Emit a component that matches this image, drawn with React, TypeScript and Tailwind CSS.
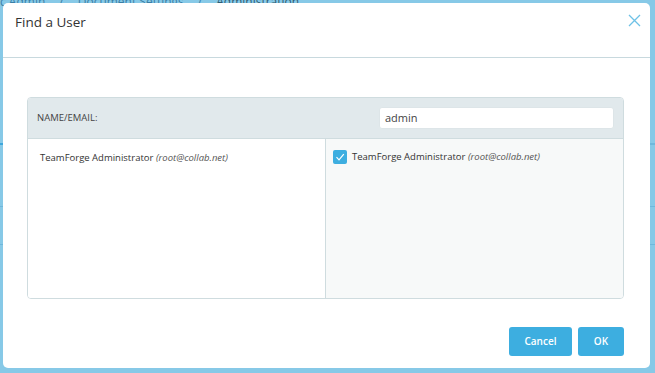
import React from "react";

export default function App() {
  const font = { fontFamily: '"Open Sans", "Liberation Sans", sans-serif' };
  return (
    <div className="relative w-[655px] h-[373px] overflow-hidden bg-[#87c9e7]" style={font}>
      {/* faint background page */}
      <div className="absolute left-0 top-[-7px] text-[12px] text-[#3a7fa6] whitespace-nowrap">
        <span>c Admin</span>
        <span className="mx-[14px]">/</span>
        <span>Document Settings</span>
        <span className="mx-[14px]">/</span>
        <span className="text-[#2f5c73]">Administration</span>
      </div>
      <div className="absolute left-0 top-[143px] w-[3px] h-[2px] bg-[#3ea7dc]" />
      <div className="absolute right-0 top-[143px] w-[5px] h-[2px] bg-[#6fb8dc]" />
      <div className="absolute right-0 top-[206px] w-[5px] h-[1px] bg-[#6fb8dc]" />
      <div className="absolute right-0 top-[244px] w-[5px] h-[1px] bg-[#6fb8dc]" />
      <div className="absolute left-0 top-[206px] w-[3px] h-[1px] bg-[#6fb8dc]" />
      <div className="absolute left-0 top-[244px] w-[3px] h-[1px] bg-[#6fb8dc]" />

      {/* dialog */}
      <div className="absolute left-[3px] top-[3px] w-[647px] h-[365px] rounded-[5px] bg-white flex flex-col">
        <div className="h-[55px] flex items-center justify-between pl-[12px] pr-[9px] border-b border-[#c8d9de]">
          <div className="text-[13.5px] font-medium text-[#333] mt-[-16px]">Find a User</div>
          <svg width="13" height="13" viewBox="0 0 13 13" className="mt-[-20px]">
            <path d="M1 1 L12 12 M12 1 L1 12" stroke="#6ec1e6" strokeWidth="1.3" />
          </svg>
        </div>
        <div className="pl-[24px] pr-[26px] pt-[39px]">
          <div className="h-[202px] border border-[#cfdcdf] rounded-[4px] overflow-hidden flex flex-col">
            <div className="h-[41px] bg-[#e1e9ec] border-b border-[#cfdcdf] flex items-center justify-between pl-[9px] pr-[9px]">
              <span className="text-[9.5px] text-[#444]">NAME/EMAIL:</span>
              <div className="w-[235px] h-[22px] bg-white rounded-[3px] border border-[#dde5e8] flex items-center px-[5px] text-[11px] text-[#444]">
                admin
              </div>
            </div>
            <div className="flex-1 flex">
              <div className="w-[298px] bg-white border-r border-[#cfdcdf] pl-[12px] pt-[12px] text-[9.5px] text-[#333]">
                TeamForge Administrator <i className="text-[#555]">(root@collab.net)</i>
              </div>
              <div className="flex-1 bg-[#f7f9f9] pl-[7px] pt-[11px]">
                <div className="flex items-center gap-[5px] text-[9.5px] text-[#333]">
                  <div className="w-[14px] h-[14px] rounded-[2px] bg-[#3daee0] flex items-center justify-center">
                    <svg width="10" height="10" viewBox="0 0 10 10">
                      <path d="M1.5 5.2 L4 7.8 L8.8 2.2" stroke="white" strokeWidth="1.2" fill="none" />
                    </svg>
                  </div>
                  <span>
                    TeamForge Administrator <i className="text-[#555]">(root@collab.net)</i>
                  </span>
                </div>
              </div>
            </div>
          </div>
        </div>
        <div className="flex justify-end gap-[6px] pr-[26px] pt-[28px]">
          <button className="w-[63px] h-[29px] rounded-[3px] bg-[#3daee0] text-white text-[10px] font-semibold">
            Cancel
          </button>
          <button className="w-[46px] h-[29px] rounded-[3px] bg-[#3daee0] text-white text-[10px] font-semibold">
            OK
          </button>
        </div>
      </div>
    </div>
  );
}
